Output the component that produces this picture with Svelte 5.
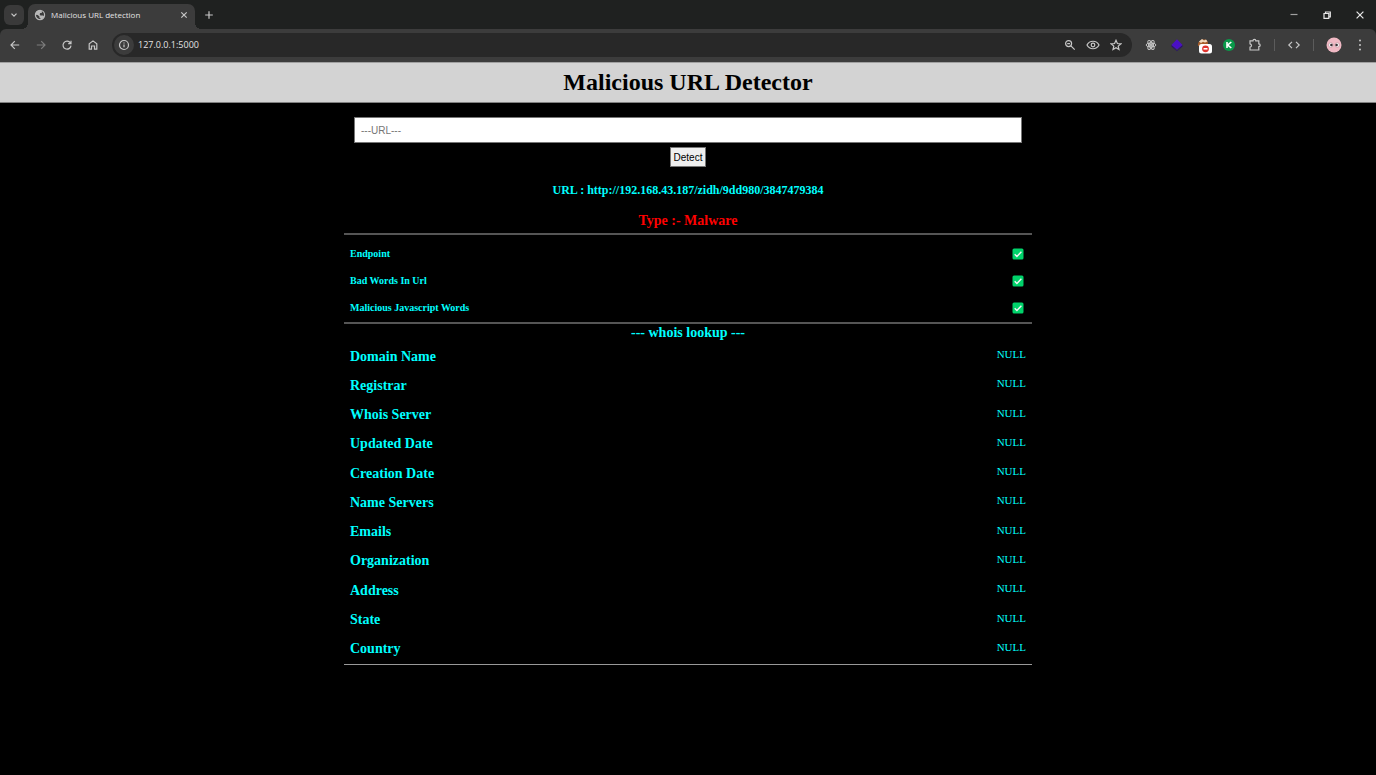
<script>
  let query = $state('');

  const checks = ['Endpoint', 'Bad Words In Url', 'Malicious Javascript Words'];

  const lookup = [
    ['Domain Name', 'NULL'],
    ['Registrar', 'NULL'],
    ['Whois Server', 'NULL'],
    ['Updated Date', 'NULL'],
    ['Creation Date', 'NULL'],
    ['Name Servers', 'NULL'],
    ['Emails', 'NULL'],
    ['Organization', 'NULL'],
    ['Address', 'NULL'],
    ['State', 'NULL'],
    ['Country', 'NULL']
  ];
</script>

<div class="browser">
  <div class="strip">
    <button class="search-tabs" aria-label="Search tabs">
      <svg width="8" height="8" viewBox="0 0 8 8"><path d="M1.5 2.7 4 5.2 6.5 2.7" /></svg>
    </button>
    <div class="tab">
      <svg class="globe" width="12" height="12" viewBox="0 0 12 12">
        <circle cx="6" cy="6" r="4.6" />
        <path class="land" d="M6.2 1.2C3.6 1 1.4 3.2 1.3 5.8L3.8 6l1.6 1.5v1.3l1.1.5v1.4c1.8-.2 3.3-1.4 4-3L9.2 6.4H6.4L5.6 5.2l.6-1.1h1.5l.4-1.5z" />
      </svg>
      <span class="tab-title">Malicious URL detection</span>
      <button aria-label="Close tab">
        <svg width="8" height="8" viewBox="0 0 8 8"><path d="m1.3 1.3 5.4 5.4M6.7 1.3 1.3 6.7" /></svg>
      </button>
    </div>
    <button class="new-tab" aria-label="New tab">
      <svg width="10" height="10" viewBox="0 0 10 10"><path d="M5 1.2v7.6M1.2 5h7.6" /></svg>
    </button>
    <div class="window-controls">
      <button class="minimize" aria-label="Minimize">
        <svg width="10" height="10" viewBox="0 0 10 10"><path d="M1.500 4.500h7" /></svg>
      </button>
      <button aria-label="Restore">
        <svg width="10" height="10" viewBox="0 0 10 10"><path d="M2 3.500h4.800v4.800H2zM3.500 3.300V2h4.800v4.800H7" /></svg>
      </button>
      <button aria-label="Close window">
        <svg width="10" height="10" viewBox="0 0 10 10"><path d="m1.600 1.600 6.800 6.800M8.400 1.600 1.600 8.400" /></svg>
      </button>
    </div>
  </div>

  <div class="toolbar">
    <nav class="history" aria-label="Navigation">
      <button aria-label="Back">
        <svg width="12" height="12" viewBox="0 0 12 12"><path d="M10.200 6H2.200M5.800 2.200 2 6l3.800 3.800" /></svg>
      </button>
      <button class="dim" aria-label="Forward">
        <svg width="12" height="12" viewBox="0 0 12 12"><path d="M1.800 6h8M6.200 2.200 10 6 6.200 9.800" /></svg>
      </button>
      <button aria-label="Reload">
        <svg width="12" height="12" viewBox="0 0 12 12"><path d="M9.400 4A4 4 0 1 0 10 6.600M10 1.800v2.800H7.200" /></svg>
      </button>
      <button aria-label="Home">
        <svg width="12" height="12" viewBox="0 0 12 12"><path d="M2.200 10.200V4.900L6 1.900l3.800 3v5.300H7.500V7h-3v3.200z" /></svg>
      </button>
    </nav>

    <div class="address">
      <button class="site-info" aria-label="Site information">
        <svg width="12" height="12" viewBox="0 0 12 12"><circle cx="6" cy="6" r="4.500" /><path d="M6 5.500v2.800M6 3.500v1" /></svg>
      </button>
      <span class="address-text">127.0.0.1:5000</span>
      <div class="address-tools">
        <button aria-label="Zoom">
          <svg width="12" height="12" viewBox="0 0 12 12"><circle cx="4.600" cy="4.600" r="3" /><path d="m6.900 6.900 3.800 3.800M3.200 4.600H6" /></svg>
        </button>
        <button aria-label="Tracking protection">
          <svg width="14" height="12" viewBox="0 0 14 12"><path d="M1 6c2.600-5 9.400-5 12 0-2.600 5-9.400 5-12 0z" /><circle cx="7" cy="6" r="1.800" /></svg>
        </button>
        <button aria-label="Bookmark this page">
          <svg width="12" height="12" viewBox="0 0 12 12"><path d="m6 1.300 1.400 3.200 3.500.3-2.700 2.300.8 3.400L6 8.700l-3 1.800.8-3.400-2.700-2.300 3.500-.3z" /></svg>
        </button>
      </div>
    </div>

    <div class="extensions">
      <button aria-label="React tools">
        <svg width="14" height="14" viewBox="0 0 14 14">
          <g class="thin">
            <ellipse cx="7" cy="7" rx="5" ry="2" />
            <ellipse cx="7" cy="7" rx="5" ry="2" transform="rotate(60 7 7)" />
            <ellipse cx="7" cy="7" rx="5" ry="2" transform="rotate(120 7 7)" />
          </g>
          <circle cx="7" cy="7" r="1" />
        </svg>
      </button>
      <button aria-label="Cube extension">
        <svg width="14" height="14" viewBox="0 0 14 14">
          <path class="cube-side" d="M1.500 7 7 12.800 12.500 7v1.500L7 13.200 1.500 8.500z" />
          <path class="cube" d="m7 1.300 5.500 5.600L7 11.600 1.500 6.900z" />
        </svg>
      </button>
      <button class="blocked" aria-label="Blocked extension">
        <svg width="18" height="18" viewBox="0 0 18 18">
          <path class="fur" d="M2 10c-.5-4 2-6.500 6-6.500 3 0 4 2 4 5z" />
          <path class="fur-light" d="M3 5.500 6 3l2 1.500L10 3.500l1.500 2L9 6.500l-2-.8-2 1.300z" />
          <rect class="badge" x="3" y="8" width="13" height="9.500" rx="2.500" />
          <circle class="stop" cx="9.500" cy="12.800" r="3.400" />
          <path class="stop-bar" d="M7.500 12.800h4" />
        </svg>
      </button>
      <button aria-label="K extension">
        <svg width="14" height="14" viewBox="0 0 14 14">
          <circle class="green" cx="7" cy="7" r="6" />
          <path class="stroke-light" d="M5 4v6M9.300 4 5.700 7l3.600 3" />
        </svg>
      </button>
      <button aria-label="Extensions">
        <svg width="14" height="14" viewBox="0 0 14 14"><path d="M2 2.800h3a1.400 1.400 0 0 1 2.800 0h3v3a1.400 1.400 0 0 1 0 2.800v3.400H2V9.200c2-.4 2-3 0-3.400z" /></svg>
      </button>
      <span class="divider"></span>
      <button aria-label="Developer tools">
        <svg width="14" height="14" viewBox="0 0 14 14"><path d="M5 3.800 1.800 7 5 10.200M9 3.800 12.200 7 9 10.200" /></svg>
      </button>
      <span class="divider"></span>
      <button aria-label="Profile">
        <svg width="16" height="16" viewBox="0 0 16 16">
          <circle class="pink" cx="8" cy="8" r="7.500" />
          <circle class="eye" cx="4.800" cy="8" r="2.200" /><circle class="eye" cx="11.200" cy="8" r="2.200" />
          <circle class="pupil" cx="5.400" cy="8" r="1.300" /><circle class="pupil" cx="10.600" cy="8" r="1.300" />
        </svg>
      </button>
      <button class="menu" aria-label="Menu">
        <svg width="6" height="14" viewBox="0 0 6 14"><g class="dots"><circle cx="3" cy="2.500" r="1" /><circle cx="3" cy="7" r="1" /><circle cx="3" cy="11.500" r="1" /></g></svg>
      </button>
    </div>
  </div>
</div>

<header>
  <h1>Malicious URL Detector</h1>
</header>

<main>
  <form onsubmit={(event) => event.preventDefault()}>
    <input type="text" aria-label="URL" placeholder="---URL---" bind:value={query} />
    <button type="submit">Detect</button>
  </form>

  <h2 class="url">URL : http://192.168.43.187/zidh/9dd980/3847479384</h2>
  <h2 class="verdict">Type :- Malware</h2>

  <table class="checks" aria-label="URL checks">
    <tbody>
      {#each checks as name}
        <tr>
          <th scope="row">{name}</th>
          <td>
            <svg width="12" height="12" viewBox="0 0 12 12" role="img" aria-label="Yes">
              <rect x="0.500" y="0.500" width="11" height="11" rx="1.500" />
              <path d="m2.700 6.300 2.200 2.200 4.500-4.700" />
            </svg>
          </td>
        </tr>
      {/each}
    </tbody>
  </table>

  <h2 class="lookup-title">--- whois lookup ---</h2>

  <table class="lookup" aria-label="whois lookup">
    <tbody>
      {#each lookup as [label, value]}
        <tr>
          <th scope="row">{label}</th>
          <td>{value}</td>
        </tr>
      {/each}
    </tbody>
  </table>
</main>

<style>
  :global(body) {
    background: #000;
    font-family: "Liberation Serif", "Times New Roman", serif;
  }

  button {
    font: inherit;
  }

  /* Browser frame */
  .browser {
    font-family: "Open Sans", "Noto Sans", sans-serif;
    background: #1f2120;
    color: #e3e3e3;
  }

  .browser button {
    display: flex;
    align-items: center;
    justify-content: center;
    flex: none;
    padding: 0;
    border: 0;
    background: none;
    color: #c7c7c7;
  }

  .browser svg {
    display: block;
    fill: none;
    stroke: currentColor;
    stroke-width: 1.2;
  }

  .strip {
    display: flex;
    align-items: center;
    height: 29px;
    padding-left: 4px;
  }

  .strip .search-tabs {
    width: 20px;
    height: 20px;
    border-radius: 6px;
    background: #3a3a3a;
  }

  .tab {
    position: relative;
    display: flex;
    align-items: center;
    align-self: flex-end;
    gap: 5px;
    width: 167px;
    height: 25px;
    margin-left: 4px;
    padding: 0 7px 4px 6px;
    box-sizing: border-box;
    border-radius: 7px 7px 0 0;
    background: #3c3c3c;
  }

  .tab::before,
  .tab::after {
    content: "";
    position: absolute;
    bottom: 0;
    width: 6px;
    height: 6px;
  }

  .tab::before {
    right: 100%;
    background: radial-gradient(circle at 0 0, transparent 6px, #3c3c3c 6px);
  }

  .tab::after {
    left: 100%;
    background: radial-gradient(circle at 100% 0, transparent 6px, #3c3c3c 6px);
  }

  .tab-title {
    flex: 1;
    font-size: 8px;
    line-height: 12px;
    white-space: nowrap;
  }

  .browser .globe {
    color: #b8b8b8;
  }

  .browser .globe .land {
    fill: currentColor;
    stroke: none;
  }

  .strip .new-tab {
    margin-left: 9px;
  }

  .window-controls {
    display: flex;
    margin-left: auto;
  }

  .strip .window-controls button {
    width: 33px;
    height: 28px;
    color: #e8e8e8;
  }

  .strip .window-controls .minimize {
    color: #a0a0a0;
  }

  .toolbar {
    display: flex;
    align-items: center;
    height: 33px;
    padding: 0 13px 1px 9px;
    box-sizing: border-box;
    border-radius: 6px 6px 0 0;
    background: #3c3c3c;
  }

  .history {
    display: flex;
    gap: 14px;
    margin-right: 13px;
  }

  .toolbar .dim {
    color: #7d7d7d;
  }

  .address {
    display: flex;
    flex: 1;
    align-items: center;
    height: 24px;
    padding: 0 10px 0 2px;
    border-radius: 12px;
    background: #282828;
  }

  .address .site-info {
    width: 20px;
    height: 20px;
    border-radius: 50%;
    background: #3c3c3c;
  }

  .address-text {
    margin-left: 4px;
    font-size: 9px;
    line-height: 12px;
  }

  .address-tools {
    display: flex;
    gap: 10px;
    margin-left: auto;
  }

  .extensions {
    display: flex;
    align-items: center;
    gap: 12px;
    margin-left: 12px;
  }

  .extensions .blocked {
    margin-right: -4px;
  }

  .extensions .menu {
    margin-left: 3px;
  }

  .divider {
    width: 1px;
    height: 12px;
    background: #5c5c5c;
  }

  .browser .thin {
    stroke-width: 1;
  }

  .browser .cube {
    fill: #4a0fc4;
    stroke: none;
  }

  .browser .cube-side {
    fill: #24077c;
    stroke: none;
  }

  .browser .fur {
    fill: #a85f2c;
    stroke: none;
  }

  .browser .fur-light {
    fill: #f3dcc0;
    stroke: none;
  }

  .browser .badge {
    fill: #fff;
    stroke: none;
  }

  .browser .stop {
    fill: #e0352f;
    stroke: none;
  }

  .browser .stop-bar,
  .browser .stroke-light {
    stroke: #fff;
    stroke-width: 1.6;
  }

  .browser .green {
    fill: #0a9a4a;
    stroke: none;
  }

  .browser .pink {
    fill: #f0b9c4;
    stroke: none;
  }

  .browser .eye {
    fill: #fff;
    stroke: #a98088;
    stroke-width: 0.5;
  }

  .browser .pupil {
    fill: #3c3036;
    stroke: none;
  }

  .browser .dots {
    fill: currentColor;
    stroke: none;
  }

  /* Page */
  header {
    padding: 4px 0 5px;
    border-top: 1px solid #a0a0a0;
    border-bottom: 1px solid #808080;
    background: #d3d3d3;
    text-align: center;
  }

  h1 {
    margin: 0;
    font-size: 24px;
    line-height: 30px;
    color: #000;
  }

  main {
    width: 50%;
    margin: 0 auto;
    padding-top: 14px;
    color: #0ff;
  }

  form {
    display: flex;
    flex-direction: column;
    align-items: center;
    gap: 4px;
    padding: 0 10px;
  }

  input {
    width: 100%;
    height: 26px;
    padding: 0 6px;
    box-sizing: border-box;
    border: 1px solid #767676;
    border-radius: 0;
    background: #fff;
    font: 10px "Liberation Sans", Arial, sans-serif;
  }

  input::placeholder {
    color: #757575;
  }

  form button {
    height: 20px;
    padding: 0 3px;
    border: 1px solid #767676;
    background: #efefef;
    font: 10px "Liberation Sans", Arial, sans-serif;
    color: #000;
  }

  h2 {
    margin: 0;
    text-align: center;
  }

  .url {
    margin-top: 16px;
    font-size: 12px;
    line-height: 14px;
  }

  .verdict {
    margin-top: 16px;
    font-size: 14px;
    line-height: 16px;
    color: #f00;
  }

  table {
    width: 100%;
    border-collapse: separate;
    border-spacing: 0;
  }

  th {
    padding: 0;
    text-align: left;
  }

  td {
    padding: 0;
    text-align: right;
  }

  .checks {
    margin-top: 4px;
    padding: 5px 6px 1px;
    border-top: 2px solid #555;
    border-bottom: 2px solid #555;
  }

  .checks th {
    height: 27px;
    font-size: 10px;
    line-height: 12px;
  }

  .checks td {
    line-height: 12px;
  }

  .checks svg {
    display: inline-block;
    margin-right: 2px;
    vertical-align: middle;
  }

  .checks rect {
    fill: #00d26a;
  }

  .checks path {
    fill: none;
    stroke: #f4f4f4;
    stroke-width: 1.4;
  }

  .lookup-title {
    font-size: 14px;
    line-height: 18px;
  }

  .lookup {
    height: 323px;
    padding: 0 6px;
    border-bottom: 1px solid #999;
  }

  .lookup th {
    font-size: 14px;
    line-height: 16px;
  }

  .lookup td {
    padding-bottom: 5px;
    font-size: 11px;
    line-height: 12px;
  }
</style>
